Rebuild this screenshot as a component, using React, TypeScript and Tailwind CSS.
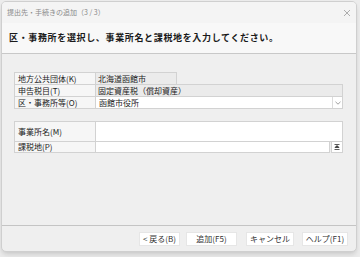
import React from "react"

const jp = { fontFamily: '"Noto Sans CJK JP", "Noto Sans", sans-serif' }

function Label({ text, h }: { text: string; h: string }) {
  return (
    <div className={`w-[82px] ${h} flex items-center px-[3px] bg-[#f6f6f6] border border-[#d2d2d2] -mt-px text-[8px] text-[#222]`}>
      {text}
    </div>
  )
}

function Btn({ text, w }: { text: string; w: string }) {
  return (
    <button className={`${w} h-[14px] bg-white border border-[#e6e6e6] text-[8px] text-[#333] flex items-center justify-center leading-none`}>
      {text}
    </button>
  )
}

export default function App() {
  return (
    <div className="w-[360px] h-[257px] bg-[#ececec] overflow-hidden" style={jp}>
      <div className="ml-px mt-px w-[356px] h-[251px] rounded-[5px] border border-[#cfcfcf] bg-[#efefef] shadow-md flex flex-col overflow-hidden">
        {/* title bar */}
        <div className="h-[21px] bg-[#f4f4f4] flex items-center justify-between pl-[5px] pr-[4px]">
          <span className="text-[7px] text-[#8a8a8a]">提出先・手続きの追加（3 / 3）</span>
          <svg width="8" height="8" viewBox="0 0 8 8" className="mr-[1px]">
            <path d="M1 1 L7 7 M7 1 L1 7" stroke="#9a9a9a" strokeWidth="0.8" />
          </svg>
        </div>
        {/* header */}
        <div className="h-[31px] bg-[#f8f8f8] border-b border-[#c8c8c8] flex items-center pl-[7px]">
          <span className="text-[9px] font-bold text-[#1a1a1a] tracking-[0.65px]">
            区・事務所を選択し、事業所名と課税地を入力してください。
          </span>
        </div>
        {/* body */}
        <div className="flex-1 pl-[12px] pr-[13px] pt-[19px] border-b border-[#c4c4c4]">
          <div className="flex flex-col">
            <div className="flex">
              <Label text="地方公共団体(K)" h="h-[13px]" />
              <div className="w-[82px] h-[13px] -mt-px -ml-px bg-[#ebebeb] border border-[#d2d2d2] flex items-center px-[2px] text-[8px] text-[#222]">
                北海道函館市
              </div>
            </div>
            <div className="flex">
              <Label text="申告税目(T)" h="h-[13px]" />
              <div className="flex-1 h-[13px] -mt-px -ml-px bg-[#ebebeb] border border-[#d2d2d2] flex items-center px-[2px] text-[8px] text-[#222]">
                固定資産税（償却資産）
              </div>
            </div>
            <div className="flex">
              <Label text="区・事務所等(O)" h="h-[13px]" />
              <div className="flex-1 h-[13px] -mt-px -ml-px bg-white border border-[#d2d2d2] flex items-center justify-between pl-[3px] text-[8px] text-[#222]">
                <span>函館市役所</span>
                <div className="w-[10px] h-full border-l border-[#dcdcdc] flex items-center justify-center">
                  <svg width="6" height="4" viewBox="0 0 6 4">
                    <path d="M0.5 0.8 L3 3.2 L5.5 0.8" stroke="#888" strokeWidth="0.8" fill="none" />
                  </svg>
                </div>
              </div>
            </div>
          </div>
          <div className="flex flex-col mt-[13px]">
            <div className="flex">
              <Label text="事業所名(M)" h="h-[21px]" />
              <div className="flex-1 h-[21px] -mt-px -ml-px bg-white border border-[#d2d2d2]" />
            </div>
            <div className="flex">
              <Label text="課税地(P)" h="h-[12px]" />
              <div className="flex-1 h-[12px] -mt-px -ml-px bg-white border border-[#d2d2d2]" />
              <div className="w-[12px] h-[12px] -mt-px ml-px bg-white border border-[#d2d2d2] flex items-center justify-center">
                <svg width="6" height="6" viewBox="0 0 6 6">
                  <path d="M0.5 0.5 H5.5 M3 1.5 L1 3.5 H5 Z M0.5 5.5 H5.5" stroke="#333" strokeWidth="0.8" fill="#333" />
                </svg>
              </div>
            </div>
          </div>
        </div>
        {/* footer */}
        <div className="h-[25px] flex items-center justify-end pr-[8px]">
          <Btn text="< 戻る(B)" w="w-[41px]" />
          <div className="ml-[6px]"><Btn text="追加(F5)" w="w-[51px]" /></div>
          <div className="ml-[9px]"><Btn text="キャンセル" w="w-[48px]" /></div>
          <div className="ml-[8px]"><Btn text="ヘルプ(F1)" w="w-[46px]" /></div>
        </div>
      </div>
    </div>
  )
}
